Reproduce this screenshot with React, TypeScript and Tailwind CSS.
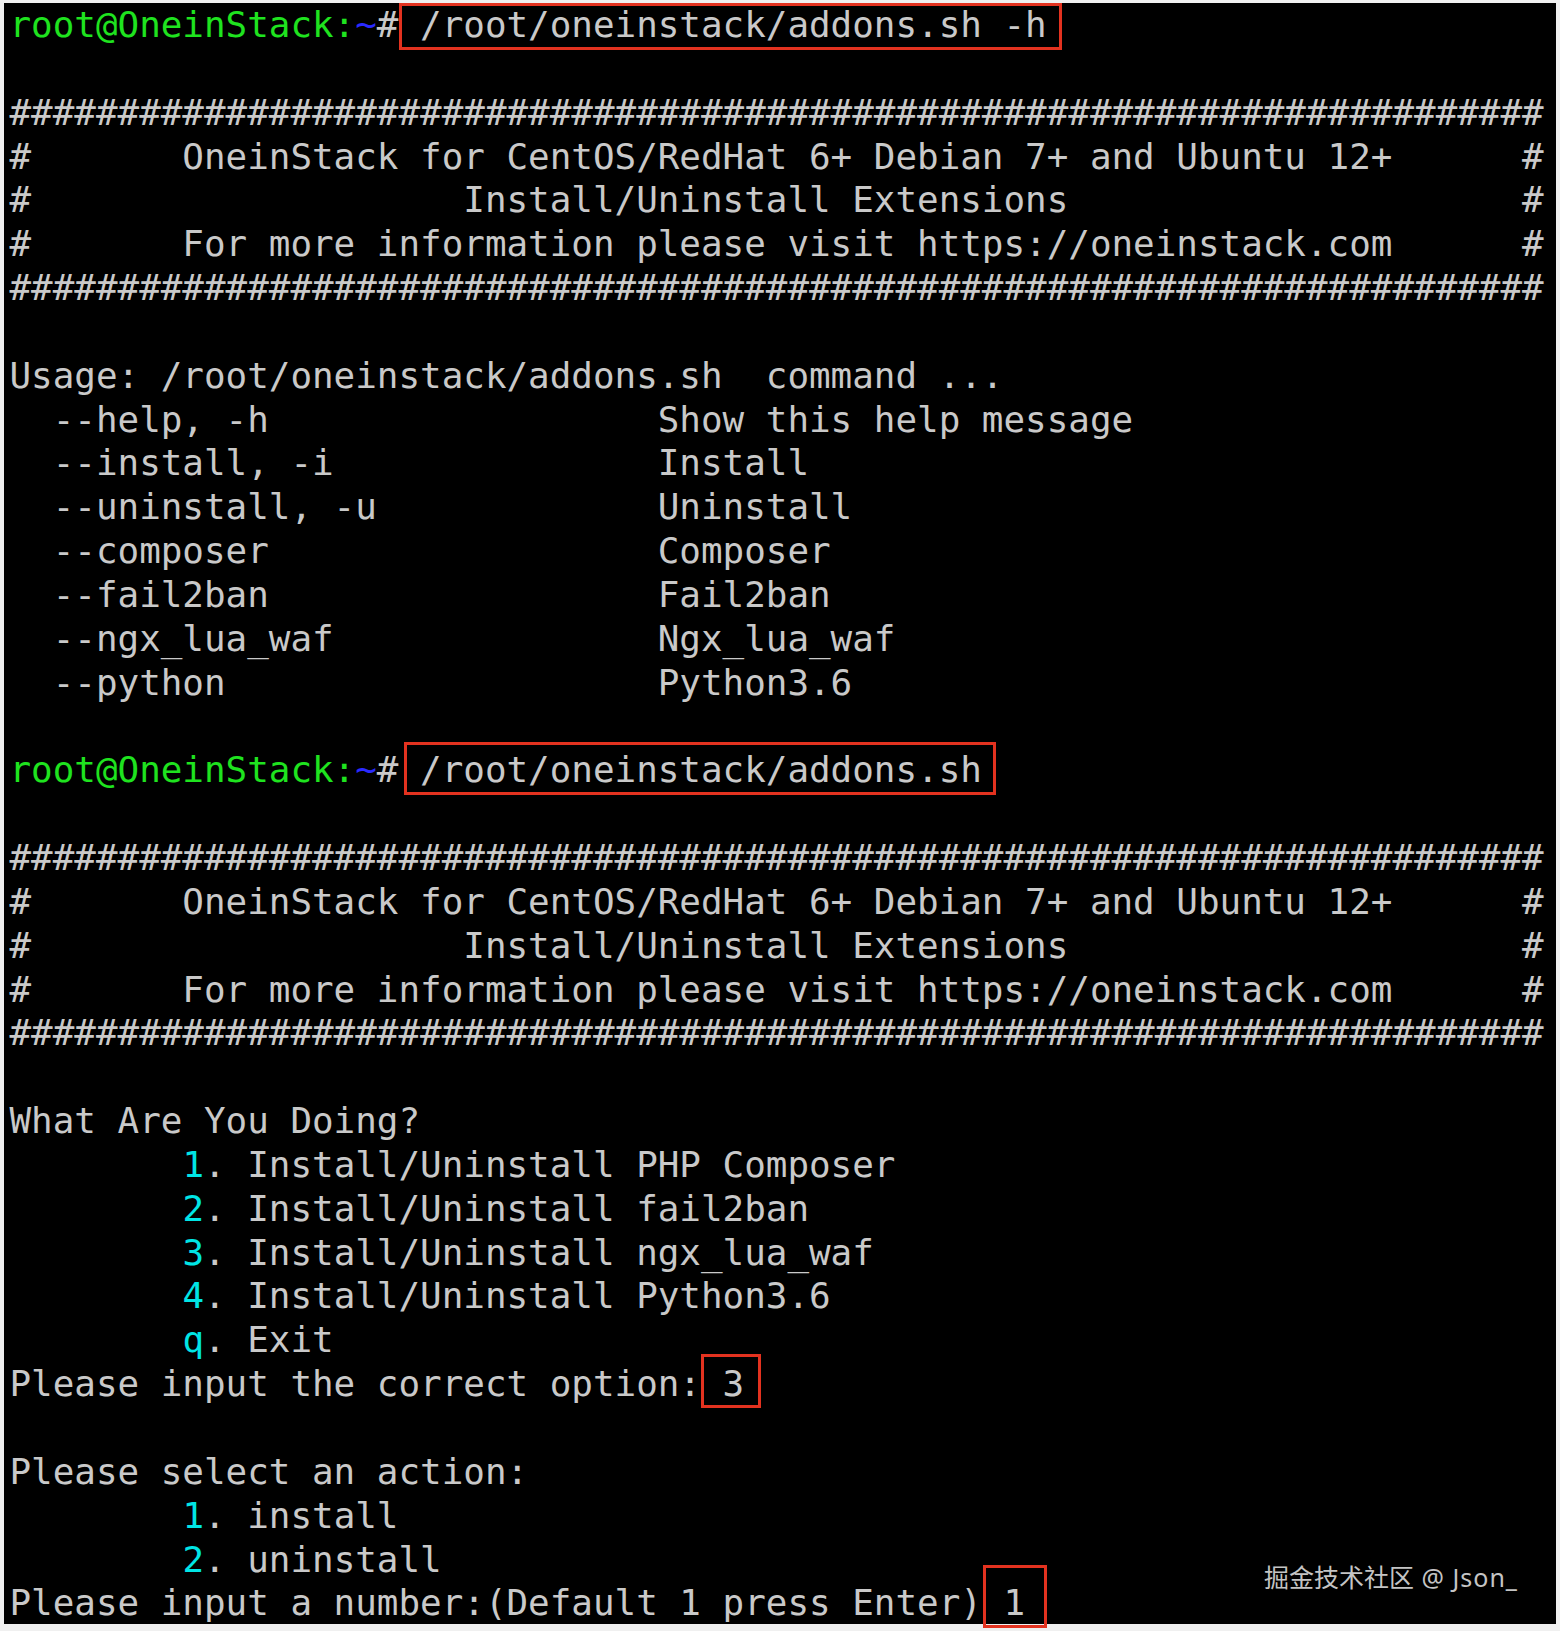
import React from "react";

const G = "text-[#1fe31f]";
const B = "text-[#2a2aff]";
const C = "text-[#00e5e5]";

function Box({
  children,
  cls,
}: {
  children: React.ReactNode;
  cls: string;
}) {
  return (
    <span className="relative">
      {children}
      <span className={`absolute border-[3px] border-[#e3321f] pointer-events-none ${cls}`} />
    </span>
  );
}

function Prompt() {
  return (
    <>
      <span className={G}>root@OneinStack:</span>
      <span className={B}>~</span>
      <span>#</span>
    </>
  );
}

function Banner() {
  return (
    <>
      <div>{"#######################################################################"}</div>
      <div>{"#       OneinStack for CentOS/RedHat 6+ Debian 7+ and Ubuntu 12+      #"}</div>
      <div>{"#                    Install/Uninstall Extensions                     #"}</div>
      <div>{"#       For more information please visit https://oneinstack.com      #"}</div>
      <div>{"#######################################################################"}</div>
    </>
  );
}

const E = () => <div>{"\u00a0"}</div>;

export default function App() {
  return (
    <div className="w-[1560px] h-[1631px] bg-[#f0f0f0] pt-[4px] pl-[4px] pr-[4px] pb-[6px]">
      <div className="relative h-full bg-black overflow-visible">
        <div
          className="-mt-[1px] pl-[5.5px] whitespace-pre text-[35.9px] leading-[43.85px] text-[#c9c9c9]"
          style={{ fontFamily: '"DejaVu Sans Mono", "Liberation Mono", monospace' }}
        >
          <div>
            <Prompt />
            <Box cls="left-[1px] right-[-15px] top-[-1px] bottom-[-4.6px]">{" /root/oneinstack/addons.sh -h"}</Box>
          </div>
          <E />
          <Banner />
          <E />
          <div>{"Usage: /root/oneinstack/addons.sh  command ..."}</div>
          <div>{"  --help, -h                  Show this help message"}</div>
          <div>{"  --install, -i               Install"}</div>
          <div>{"  --uninstall, -u             Uninstall"}</div>
          <div>{"  --composer                  Composer"}</div>
          <div>{"  --fail2ban                  Fail2ban"}</div>
          <div>{"  --ngx_lua_waf               Ngx_lua_waf"}</div>
          <div>{"  --python                    Python3.6"}</div>
          <E />
          <div>
            <Prompt />
            <Box cls="left-[6px] right-[-14px] top-[-7.5px] bottom-[-5px]">{" /root/oneinstack/addons.sh"}</Box>
          </div>
          <E />
          <Banner />
          <E />
          <div>{"What Are You Doing?"}</div>
          <div>
            {"        "}
            <span className={C}>1</span>
            {". Install/Uninstall PHP Composer"}
          </div>
          <div>
            {"        "}
            <span className={C}>2</span>
            {". Install/Uninstall fail2ban"}
          </div>
          <div>
            {"        "}
            <span className={C}>3</span>
            {". Install/Uninstall ngx_lua_waf"}
          </div>
          <div>
            {"        "}
            <span className={C}>4</span>
            {". Install/Uninstall Python3.6"}
          </div>
          <div>
            {"        "}
            <span className={C}>q</span>
            {". Exit"}
          </div>
          <div>
            {"Please input the correct option:"}
            <Box cls="left-0 right-[-17px] top-[-9.6px] bottom-[-4px]">{" 3"}</Box>
          </div>
          <E />
          <div>{"Please select an action:"}</div>
          <div>
            {"        "}
            <span className={C}>1</span>
            {". install"}
          </div>
          <div>
            {"        "}
            <span className={C}>2</span>
            {". uninstall"}
          </div>
          <div>
            {"Please input a number:(Default 1 press Enter)"}
            <Box cls="left-[1px] right-[-22px] top-[-17.4px] bottom-[-4.2px]">{" 1"}</Box>
          </div>
        </div>
        <div
          className="absolute left-[1260px] top-[1562px] text-[25px] leading-none text-[#c4c4c4] whitespace-nowrap"
          style={{ fontFamily: '"Noto Sans", "Noto Sans CJK SC", sans-serif' }}
        >
          掘金技术社区<span className="tracking-[1px]"> @ Json_</span>
        </div>
      </div>
    </div>
  );
}
